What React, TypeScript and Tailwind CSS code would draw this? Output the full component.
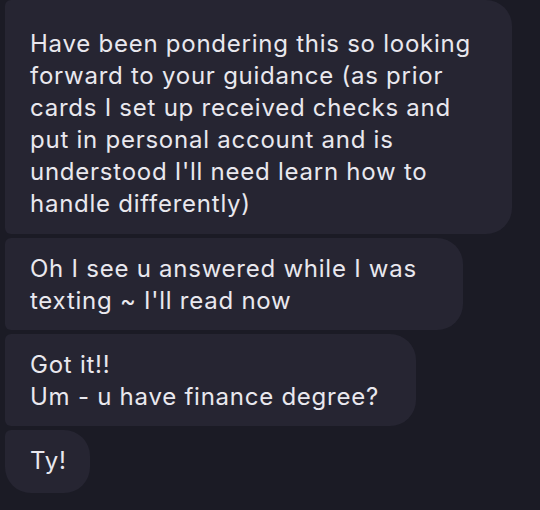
const bubbles: { lines: string[]; width: string; radius: string; pad: string }[] = [
  {
    lines: [
      'Have been pondering this so looking',
      'forward to your guidance (as prior',
      'cards I set up received checks and',
      'put in personal account and is',
      "understood I'll need learn how to",
      'handle differently)',
    ],
    width: 'w-[507px]',
    radius: 'rounded-l-[6px] rounded-r-[26px]',
    pad: 'pt-[28px] pb-[14px]',
  },
  {
    lines: ['Oh I see u answered while I was', "texting ~ I'll read now"],
    width: 'w-[458px]',
    radius: 'rounded-l-[6px] rounded-r-[26px]',
    pad: 'pt-[15px] pb-[13px]',
  },
  {
    lines: ['Got it!!', 'Um - u have finance degree?'],
    width: 'w-[411px]',
    radius: 'rounded-l-[6px] rounded-r-[26px]',
    pad: 'pt-[15px] pb-[13px]',
  },
  {
    lines: ['Ty!'],
    width: 'w-[85px]',
    radius: 'rounded-tl-[6px] rounded-bl-[26px] rounded-r-[26px]',
    pad: 'pt-[15px] pb-[16px]',
  },
]

export default function App() {
  return (
    <div className="h-[510px] w-[540px] overflow-hidden bg-[#1b1b25] font-['Inter',sans-serif]">
      <div className="flex flex-col items-start gap-[4px] pl-[5px]">
        {bubbles.map((b, i) => (
          <div
            key={i}
            className={`${b.width} ${b.radius} ${b.pad} bg-[#262532] pl-[25px] text-[24px] leading-8 tracking-[0.75px] text-[#e9e8ee]`}
          >
            {b.lines.map((l, j) => (
              <div key={j} className="whitespace-nowrap">
                {l}
              </div>
            ))}
          </div>
        ))}
      </div>
    </div>
  )
}
